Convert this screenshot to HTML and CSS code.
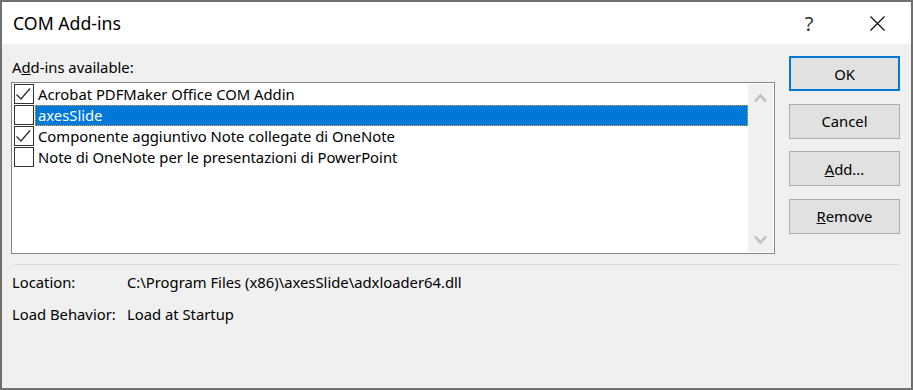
FILE: index.html
```html
<!DOCTYPE html>
<html lang="en">
<head>
<meta charset="utf-8">
<title>COM Add-ins</title>
<link rel="stylesheet" href="styles.css">
</head>
<body>
<div class="window">
  <div class="titlebar">
    <div class="title">COM Add-ins</div>
    <div class="caption-btn help">?</div>
    <div class="caption-btn close">
      <svg width="15" height="15" viewBox="0 0 15 15"><path d="M0.5 0.5 L14.5 14.5 M14.5 0.5 L0.5 14.5" stroke="#000" stroke-width="1.1" fill="none"/></svg>
    </div>
  </div>
  <div class="content">
    <div class="main">
      <div class="left">
        <div class="label">A<u>d</u>d-ins available:</div>
        <div class="list">
          <div class="rows">
            <div class="row">
              <span class="check"><svg width="18" height="18" viewBox="0 0 18 18"><polyline points="1.5,9.5 6,14 15,3.5" stroke="#333" stroke-width="1.4" fill="none"/></svg></span>
              <span class="item">Acrobat PDFMaker Office COM Addin</span>
            </div>
            <div class="row">
              <span class="check"></span>
              <span class="item selected">axesSlide</span>
            </div>
            <div class="row">
              <span class="check"><svg width="18" height="18" viewBox="0 0 18 18"><polyline points="1.5,9.5 6,14 15,3.5" stroke="#333" stroke-width="1.4" fill="none"/></svg></span>
              <span class="item">Componente aggiuntivo Note collegate di OneNote</span>
            </div>
            <div class="row">
              <span class="check"></span>
              <span class="item">Note di OneNote per le presentazioni di PowerPoint</span>
            </div>
          </div>
          <div class="scrollbar">
            <svg class="chev" width="13" height="10" viewBox="0 0 13 10"><polyline points="1,8.5 6.5,2.5 12,8.5" stroke="#c2c2c2" stroke-width="2.6" fill="none"/></svg>
            <svg class="chev" width="13" height="10" viewBox="0 0 13 10"><polyline points="1,1.5 6.5,7.5 12,1.5" stroke="#c2c2c2" stroke-width="2.6" fill="none"/></svg>
          </div>
        </div>
      </div>
      <div class="buttons">
        <div class="btn default">OK</div>
        <div class="btn">Cancel</div>
        <div class="btn"><u>A</u>dd...</div>
        <div class="btn"><u>R</u>emove</div>
      </div>
    </div>
    <div class="sep"></div>
    <div class="info">
      <div class="key">Location:</div>
      <div class="val">C:\Program Files (x86)\axesSlide\adxloader64.dll</div>
      <div class="key">Load Behavior:</div>
      <div class="val">Load at Startup</div>
    </div>
  </div>
</div>
</body>
</html>
```

FILE: styles.css
```css
html, body {
  margin: 0;
  padding: 0;
}
body {
  font-family: "Noto Sans", "Open Sans", sans-serif;
  font-size: 14.8px;
  color: #000;
  background: #f0f0f0;
}
.window {
  width: 913px;
  height: 390px;
  box-sizing: border-box;
  border: 2px solid #707070;
  background: #f0f0f0;
  display: flex;
  flex-direction: column;
  overflow: hidden;
}
.titlebar {
  height: 42px;
  background: #fff;
  display: flex;
  align-items: center;
  flex-shrink: 0;
}
.title {
  flex: 1;
  padding-left: 11px;
  font-size: 17.7px;
}
.caption-btn {
  width: 68px;
  height: 42px;
  display: flex;
  align-items: center;
  justify-content: center;
}
.help {
  font-size: 20px;
  color: #333;
}
.content {
  padding: 12px 11px 0 9px;
  display: flex;
  flex-direction: column;
}
.main {
  display: flex;
  align-items: flex-start;
}
.left {
  flex: 1;
  display: flex;
  flex-direction: column;
}
.label {
  height: 22px;
  line-height: 22px;
  margin-bottom: 4px;
  padding-left: 1px;
}
.list {
  height: 172px;
  box-sizing: border-box;
  border: 1px solid #828790;
  background: #fff;
  padding: 1px;
  display: flex;
}
.rows {
  flex: 1;
  display: flex;
  flex-direction: column;
}
.row {
  height: 21px;
  display: flex;
  padding-left: 1px;
}
.check {
  width: 20px;
  height: 20px;
  box-sizing: border-box;
  border: 1px solid #333;
  background: #fff;
  display: flex;
  align-items: center;
  justify-content: center;
  flex-shrink: 0;
}
.item {
  flex: 1;
  margin-left: 1px;
  height: 21px;
  box-sizing: border-box;
  border: 1px solid transparent;
  padding-left: 2px;
  line-height: 19px;
  white-space: nowrap;
}
.item.selected {
  background: #0078d7;
  color: #fff;
  border: 1px dotted #f0a040;
}
.scrollbar {
  width: 25px;
  background: #f0f0f0;
  display: flex;
  flex-direction: column;
  align-items: center;
  justify-content: space-between;
  padding: 9px 0 7px;
  box-sizing: border-box;
}
.chev {
  display: block;
}
.buttons {
  width: 111px;
  margin-left: 14px;
  display: flex;
  flex-direction: column;
  gap: 12.67px;
}
.btn {
  height: 35px;
  box-sizing: border-box;
  border: 1px solid #adadad;
  background: #e1e1e1;
  display: flex;
  align-items: center;
  justify-content: center;
}
.btn.default {
  border: 2px solid #0078d7;
}
.sep {
  height: 1px;
  background: #dadada;
  margin: 10px 0 0 3px;
}
.info {
  margin-top: 6px;
  display: grid;
  grid-template-columns: 115px auto;
  row-gap: 10px;
  line-height: 22px;
  padding-left: 1px;
}
.key, .val {
  white-space: nowrap;
}
```
